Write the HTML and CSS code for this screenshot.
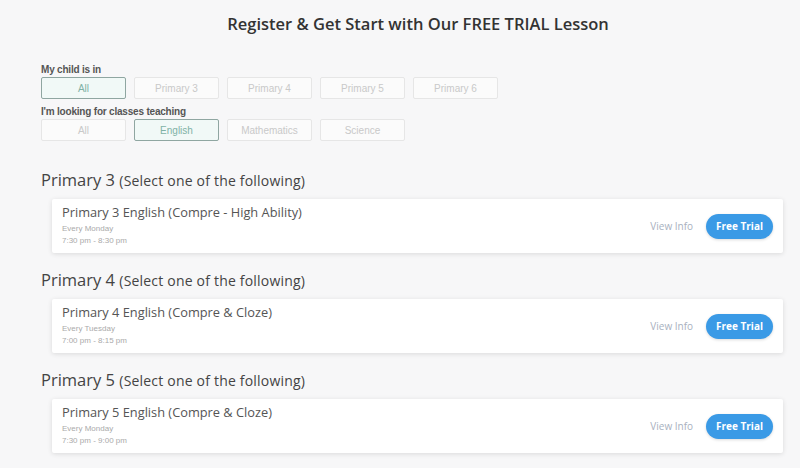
FILE: index.html
```html
<!DOCTYPE html>
<html lang="en">
<head>
    <meta charset="UTF-8">
    <meta name="viewport" content="width=device-width, initial-scale=1.0">
    <title>Register &amp; Get Start with Our FREE TRIAL Lesson</title>
    <link rel="stylesheet" href="styles.css">
</head>
<body>
    <div class="page">
        <h1 class="title">Register &amp; Get Start with Our FREE TRIAL Lesson</h1>

        <!-- Filters -->
        <div class="filters">
            <p class="filter-label">My child is in</p>
            <div class="filter-row">
                <button class="chip active">All</button>
                <button class="chip">Primary 3</button>
                <button class="chip">Primary 4</button>
                <button class="chip">Primary 5</button>
                <button class="chip">Primary 6</button>
            </div>

            <p class="filter-label">I'm looking for classes teaching</p>
            <div class="filter-row">
                <button class="chip">All</button>
                <button class="chip active">English</button>
                <button class="chip">Mathematics</button>
                <button class="chip">Science</button>
            </div>
        </div>

        <!-- Primary 3 -->
        <section class="level">
            <h2 class="level-title">Primary 3 <span>(Select one of the following)</span></h2>
            <div class="lesson">
                <div class="lesson-info">
                    <h3>Primary 3 English (Compre - High Ability)</h3>
                    <p>Every Monday</p>
                    <p>7:30 pm - 8:30 pm</p>
                </div>
                <div class="lesson-actions">
                    <a href="#" class="view-info">View Info</a>
                    <button class="trial">Free Trial</button>
                </div>
            </div>
        </section>

        <!-- Primary 4 -->
        <section class="level">
            <h2 class="level-title">Primary 4 <span>(Select one of the following)</span></h2>
            <div class="lesson">
                <div class="lesson-info">
                    <h3>Primary 4 English (Compre &amp; Cloze)</h3>
                    <p>Every Tuesday</p>
                    <p>7:00 pm - 8:15 pm</p>
                </div>
                <div class="lesson-actions">
                    <a href="#" class="view-info">View Info</a>
                    <button class="trial">Free Trial</button>
                </div>
            </div>
        </section>

        <!-- Primary 5 -->
        <section class="level">
            <h2 class="level-title">Primary 5 <span>(Select one of the following)</span></h2>
            <div class="lesson">
                <div class="lesson-info">
                    <h3>Primary 5 English (Compre &amp; Cloze)</h3>
                    <p>Every Monday</p>
                    <p>7:30 pm - 9:00 pm</p>
                </div>
                <div class="lesson-actions">
                    <a href="#" class="view-info">View Info</a>
                    <button class="trial">Free Trial</button>
                </div>
            </div>
        </section>
    </div>
</body>
</html>
```

FILE: styles.css
```css
body {
    margin: 0;
    background-color: #f7f7f8;
    font-family: "Open Sans", sans-serif;
    color: #444;
    overflow: hidden;
}

.page {
    padding: 12px 17px 0 41px;
}

.title {
    margin: 0 0 29px;
    text-align: center;
    font-size: 16.5px;
    font-weight: 600;
    color: #333;
    padding-left: 12px;
}

.filters {
    margin-bottom: 27px;
}

.filter-label {
    margin: 0 0 2px;
    font-family: "Liberation Sans", sans-serif;
    font-size: 10px;
    font-weight: bold;
    color: #555;
    letter-spacing: -0.2px;
}

.filter-row {
    display: flex;
    gap: 8px;
    margin-bottom: 7px;
}

.chip {
    width: 85px;
    height: 22px;
    padding: 0;
    background: #fbfbfb;
    border: 1px solid #e6e6e6;
    border-radius: 2px;
    font-family: "Liberation Sans", sans-serif;
    font-size: 10px;
    color: #c9c9c9;
}

.chip.active {
    background: #f1f9f7;
    border-color: #8fa6a1;
    color: #7fb2a6;
}

.level {
    margin-bottom: 15px;
}

.level-title {
    margin: 0 0 8px;
    font-size: 16.5px;
    font-weight: 400;
    color: #444;
}

.level-title span {
    font-size: 14px;
    letter-spacing: 0.2px;
}

.lesson {
    display: flex;
    align-items: center;
    justify-content: space-between;
    margin-left: 11px;
    height: 54px;
    box-sizing: border-box;
    padding: 0 10px;
    background: #fff;
    box-shadow: 0 1px 5px rgba(0, 0, 0, 0.12);
    border-radius: 2px;
}

.lesson-info {
    align-self: flex-start;
    padding-top: 4px;
}

.lesson-info h3 {
    margin: 0 0 2px;
    font-size: 12.8px;
    font-weight: 400;
    color: #555;
}

.lesson-info p {
    margin: 0;
    font-family: "Liberation Sans", sans-serif;
    font-size: 8px;
    line-height: 12px;
    color: #aaa;
}

.lesson-actions {
    display: flex;
    align-items: center;
    gap: 13px;
}

.view-info {
    font-size: 10px;
    color: #a9b1c0;
    text-decoration: none;
}

.trial {
    height: 25px;
    padding: 0 10px;
    border: none;
    border-radius: 13px;
    background-color: #3a9ae6;
    color: #fff;
    font-family: "Open Sans", sans-serif;
    font-size: 10px;
    font-weight: 700;
    box-shadow: 0 1px 3px rgba(0, 0, 0, 0.15);
}
```
